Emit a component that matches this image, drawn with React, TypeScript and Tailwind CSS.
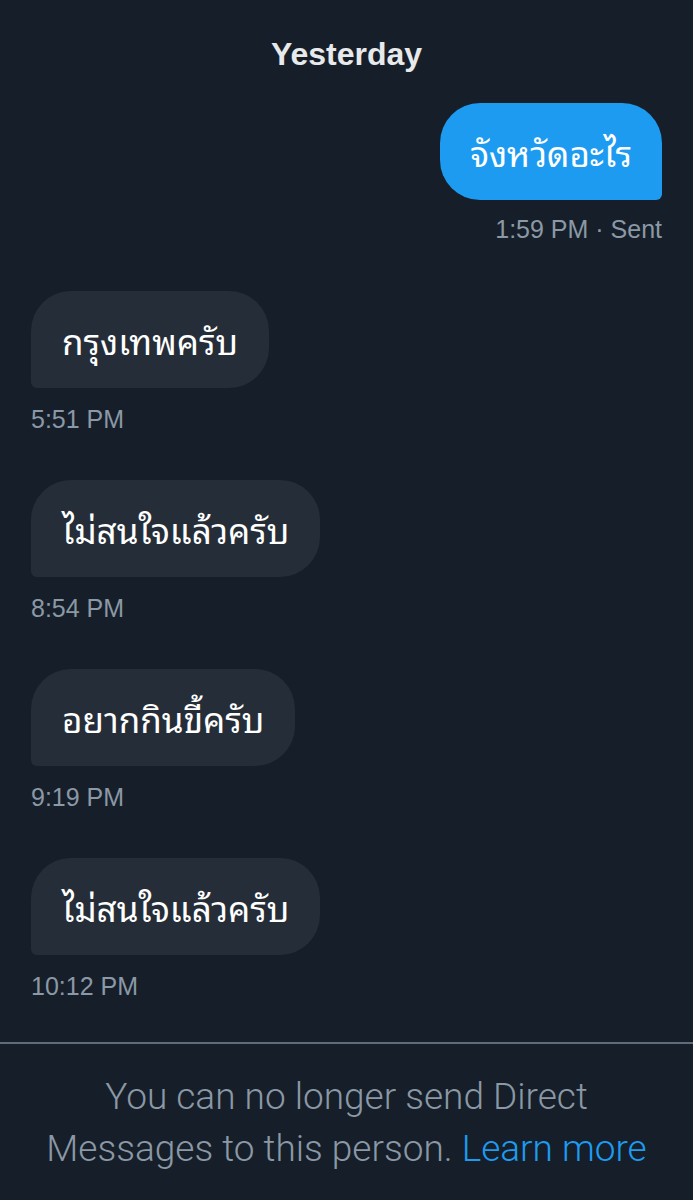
import React from "react";

const thai = {
  fontFamily:
    '"Noto Sans Thai Looped", "Noto Serif Thai", "Loma", "Garuda", "Noto Sans Thai", "Noto Sans", sans-serif',
};

function Received({ text, time }: { text: string; time: string }) {
  return (
    <div className="flex flex-col items-start">
      <div
        className="h-[97px] flex items-center px-[31px] bg-[#252e38] text-white text-[35px] rounded-tl-[40px] rounded-tr-[40px] rounded-br-[40px] rounded-bl-[6px]"
        style={thai}
      >
        {text}
      </div>
      <div className="mt-[16px] h-[30px] leading-[30px] text-[25px] text-[#8b98a5] font-['Liberation_Sans',Arial,sans-serif]">
        {time}
      </div>
    </div>
  );
}

export default function App() {
  return (
    <div className="w-[693px] min-h-[1200px] bg-[#161f29] flex flex-col font-['Liberation_Sans',Arial,sans-serif]">
      <div className="pt-[34px] h-[74px] text-center text-[32px] leading-[40px] font-bold text-[#e7e9ea]">
        Yesterday
      </div>
      <div className="px-[31px] pt-[29px] flex flex-col">
        <div className="flex flex-col items-end">
          <div
            className="h-[97px] flex items-center px-[30px] bg-[#1d9bf0] text-white text-[35px] rounded-tl-[40px] rounded-tr-[40px] rounded-bl-[40px] rounded-br-[6px]"
            style={thai}
          >
            จังหวัดอะไร
          </div>
          <div className="mt-[14px] h-[30px] leading-[30px] text-[25px] text-[#8b98a5] whitespace-pre">1:59 PM · Sent</div>
        </div>
        <div className="mt-[47px] flex flex-col gap-[46px]">
          <Received text="กรุงเทพครับ" time="5:51 PM" />
          <Received text="ไม่สนใจแล้วครับ" time="8:54 PM" />
          <Received text="อยากกินขี้ครับ" time="9:19 PM" />
          <Received text="ไม่สนใจแล้วครับ" time="10:12 PM" />
        </div>
      </div>
      <div className="mt-[41px] h-[2px] bg-[#5f6c79]" />
      <div className="pt-[27px] text-center">
        <p className="text-[37px] leading-[52px] text-[#8b98a5] font-['Roboto',sans-serif] font-light">
          You can no longer send Direct
          <br />
          Messages to this person. <span className="text-[#1d9bf0]">Learn more</span>
        </p>
      </div>
    </div>
  );
}
